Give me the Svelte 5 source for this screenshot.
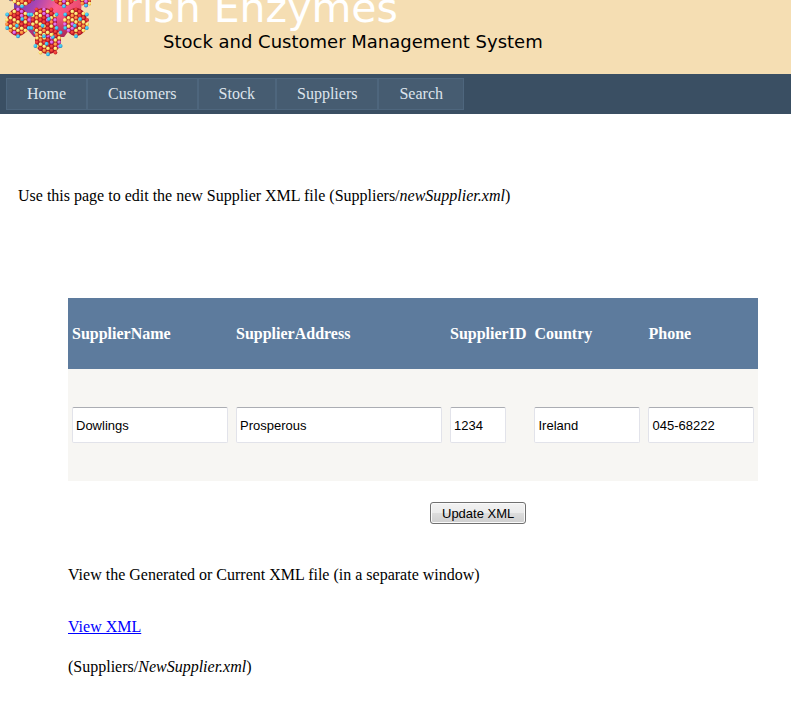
<script>
  const menu = ['Home', 'Customers', 'Stock', 'Suppliers', 'Search'];

  let fields = $state([
    { id: 'name', label: 'SupplierName', value: 'Dowlings', size: 'medium' },
    { id: 'address', label: 'SupplierAddress', value: 'Prosperous', size: 'large' },
    { id: 'code', label: 'SupplierID', value: '1234', size: 'tiny' },
    { id: 'country', label: 'Country', value: 'Ireland', size: 'small' },
    { id: 'phone', label: 'Phone', value: '045-68222', size: 'small' }
  ]);

  // Each molecule cluster is a rounded hexagon packed with small spheres.
  const clusters = [
    { x: 22, y: -7, rx: 13, ry: 14 },
    { x: 64, y: -7, rx: 13, ry: 14 },
    { x: 86, y: -7, rx: 9, ry: 13 },
    { x: 48, y: 40, rx: 14, ry: 15 },
    { x: 18, y: 22, rx: 12, ry: 15 },
    { x: 76, y: 22, rx: 12, ry: 15 },
    { x: 44, y: 22, rx: 14, ry: 15 }
  ];
  const tones = ['gold', 'red', 'gold', 'violet', 'orange', 'gold', 'red', 'violet', 'gold', 'orange', 'red'];
  const blueSpots = [[-0.9, -0.5], [0.9, -0.5], [-0.9, 0.4], [0.9, 0.4], [0, 0.95], [-0.1, 0.25], [0.35, -0.2]];

  function pack({ x, y, rx, ry }) {
    const balls = [];
    for (let col = -4; col <= 4; col++) {
      for (let row = -4; row <= 4; row++) {
        const dx = col * 3.7;
        const dy = row * 4.2 + (col % 2 ? 2.1 : 0);
        if ((dx / rx) ** 2 + (dy / ry) ** 2 > 1) continue;
        const pick = Math.abs((row + 6) * 7 + (col + 6) * (col + 9) * 3 + x) % tones.length;
        balls.push({ x: x + dx, y: y + dy, tone: tones[pick] });
      }
    }
    for (const [u, v] of blueSpots) {
      balls.push({ x: x + u * rx, y: y + v * ry, tone: 'blue' });
    }
    return balls;
  }
</script>

<header>
  <svg class="logo" width="86" height="62" viewBox="5 -4 86 62" aria-hidden="true">
    <defs>
      <linearGradient id="core" x1="0" y1="0" x2="1" y2="0.3">
        <stop offset="0" stop-color="#6a3cae" />
        <stop offset="0.35" stop-color="#a945b4" />
        <stop offset="0.65" stop-color="#ff5f8c" />
        <stop offset="1" stop-color="#e8486c" />
      </linearGradient>
      <linearGradient id="shade" x1="0" y1="0" x2="0" y2="1">
        <stop offset="0.5" stop-color="#80104a" stop-opacity="0" />
        <stop offset="1" stop-color="#80104a" stop-opacity="0.6" />
      </linearGradient>
      {#each [['gold', '#fff08a', '#e2a02a'], ['red', '#f5483c', '#b51024'], ['violet', '#e676ea', '#a42aa8'], ['orange', '#ffa04a', '#dc4a20'], ['blue', '#4ed4f5', '#1680c4']] as [name, light, dark]}
        <radialGradient id={name} cx="0.4" cy="0.38" r="0.65">
          <stop offset="0.35" stop-color={light} />
          <stop offset="1" stop-color={dark} />
        </radialGradient>
      {/each}
    </defs>
    <path d="M14-5H82L81 14L64 37H34L14 14Z" fill="url(#core)" />
    <path d="M14-5H82L81 14L64 37H34L14 14Z" fill="url(#shade)" />
    {#each clusters as c}
      <ellipse cx={c.x} cy={c.y} rx={c.rx - 1} ry={c.ry - 1} fill="#a81426" />
      {#each pack(c) as ball}
        <circle cx={ball.x} cy={ball.y} r="1.9" fill="url(#{ball.tone})" />
      {/each}
    {/each}
  </svg>
  <div class="titles">
    <h1>Irish Enzymes</h1>
    <p>Stock and Customer Management System</p>
  </div>
</header>

<nav>
  {#each menu as item}
    <a href="#{item.toLowerCase()}">{item}</a>
  {/each}
</nav>

<main>
  <p class="intro">Use this page to edit the new Supplier XML file (Suppliers/<em>newSupplier.xml</em>)</p>

  <form onsubmit={(event) => event.preventDefault()}>
    <table>
      <thead>
        <tr>
          {#each fields as field}
            <th scope="col"><label for={field.id}>{field.label}</label></th>
          {/each}
        </tr>
      </thead>
      <tbody>
        <tr>
          {#each fields as field}
            <td><input id={field.id} class={field.size} type="text" bind:value={field.value} /></td>
          {/each}
        </tr>
      </tbody>
    </table>
    <div class="actions"><button type="submit">Update XML</button></div>
  </form>

  <section>
    <p>View the Generated or Current XML file (in a separate window)</p>
    <p class="link"><a href="#xml">View XML</a></p>
    <p>(Suppliers/<em>NewSupplier.xml</em>)</p>
  </section>
</main>

<style>
  :global(body) {
    margin: 0;
    background: #fff;
    color: #000;
    font: 16px/20px "Liberation Serif", "Times New Roman", serif;
  }
  h1,
  p {
    margin: 0;
    font-weight: normal;
  }
  header {
    display: flex;
    align-items: flex-start;
    height: 74px;
    padding-left: 5px;
    overflow: hidden;
    background: #f5deb3;
    font-family: "DejaVu Sans", Verdana, sans-serif;
  }
  .logo {
    flex: none;
    margin-top: -4px;
  }
  .titles {
    margin-left: 22px;
    white-space: nowrap;
  }
  h1 {
    margin-top: -16px;
    color: #fff;
    font-size: 41px;
    line-height: 48px;
  }
  .titles p {
    padding-left: 50px;
    font-size: 18px;
    line-height: 20px;
  }
  nav {
    display: flex;
    padding: 4px 6px;
    background: #3a4f63;
  }
  nav a {
    padding: 5px 20px;
    border: 1px solid #4e667d;
    background: #465c71;
    color: #dde4ec;
    text-decoration: none;
  }
  main {
    padding: 72px 18px 0;
  }
  form {
    padding: 92px 0 0 50px;
  }
  table {
    border-collapse: collapse;
  }
  th {
    height: 71px;
    padding: 0 4px;
    background: #5d7b9d;
    color: #fff;
    text-align: left;
  }
  td {
    height: 112px;
    padding: 0 4px;
    background: #f7f6f3;
  }
  input {
    display: block;
    box-sizing: border-box;
    height: 36px;
    padding: 0 3px;
    border: 1px solid #e2e3ea;
    border-top-color: #abadb3;
    border-radius: 2px;
    background: #fff;
    color: #000;
    font: 13px "Liberation Sans", Arial, sans-serif;
  }
  .tiny { width: 56px; }
  .small { width: 106px; }
  .medium { width: 156px; }
  .large { width: 206px; }
  .actions {
    display: flex;
    padding: 21px 0 0 362px;
  }
  button {
    height: 22px;
    padding: 0 11px;
    border: 1px solid #707070;
    border-radius: 3px;
    background: linear-gradient(#f2f2f2, #ebebeb 50%, #dddddd 50%, #cfcfcf);
    box-shadow: inset 0 0 0 1px #fafafa;
    color: #000;
    font: 13px "Liberation Sans", Arial, sans-serif;
  }
  section {
    padding: 41px 0 0 50px;
  }
  .link {
    padding: 32px 0 20px;
  }
  .link a {
    color: #00f;
  }
</style>
